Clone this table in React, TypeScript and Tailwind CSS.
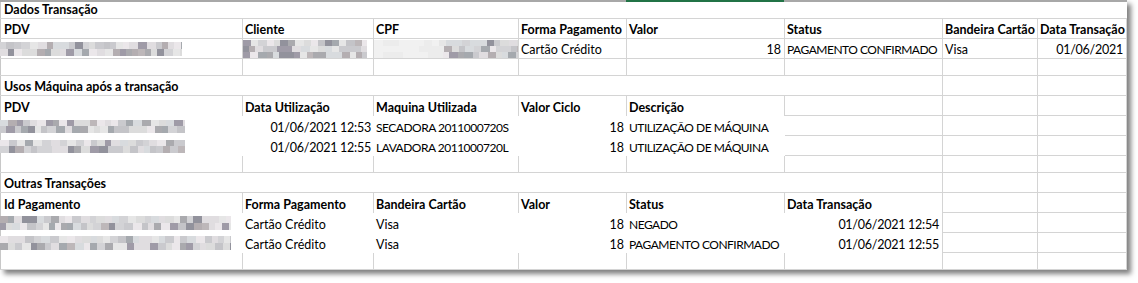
import type { ReactNode } from 'react';
import clsx from 'clsx';

const COLS = 'grid grid-cols-[243px_131px_145px_108px_158px_158px_95px_89px]';

const SPAN: Record<number, string> = {
  1: 'col-span-1',
  2: 'col-span-2',
  3: 'col-span-3',
  4: 'col-span-4',
  5: 'col-span-5',
  6: 'col-span-6',
  7: 'col-span-7',
  8: 'col-span-8',
};

const LIGHT = ['#e6e6e6', '#dcdcdc', '#d3d3d6', '#cacace', '#ebe7ea', '#d8dbde', '#e0dde0'];
const DARK = ['#aaaaae', '#9f9ba7', '#b4aeb1', '#92929c', '#bdb7b9', '#a5a9ae', '#c4c4c8'];

function rng(seed: number) {
  let s = seed * 9301 + 49297;
  return () => {
    s = (s * 9301 + 49297) % 233280;
    return s / 233280;
  };
}

// pixelated "blurred" patch standing in for hidden data
function Mosaic({
  w,
  h,
  seed,
  fade = 0,
}: {
  w: number;
  h: number;
  seed: number;
  fade?: number;
}) {
  const rand = rng(seed);
  const rows = Math.max(1, Math.round(h / 7));
  const bh = h / rows;
  const blocks: { x: number; y: number; bw: number; c: string }[] = [];
  for (let r = 0; r < rows; r++) {
    let x = 0;
    while (x < w) {
      const bw = Math.min(w - x, 6 + Math.floor(rand() * 4));
      const dark = rand() < (r === rows - 1 ? 0.45 : 0.3);
      const pal = dark ? DARK : LIGHT;
      let c = pal[Math.floor(rand() * pal.length)];
      if (x < fade) c = rand() < 0.5 ? '#f1f1f1' : '#ececec';
      blocks.push({ x, y: r * bh, bw, c });
      x += bw;
    }
  }
  return (
    <div className="relative shrink-0 blur-[0.4px]" style={{ width: w, height: h }}>
      {blocks.map((b, i) => (
        <div
          key={i}
          className="absolute"
          style={{ left: b.x, top: b.y, width: b.bw, height: bh, background: b.c }}
        />
      ))}
    </div>
  );
}

function Cell({
  span = 1,
  r = true,
  b = true,
  right,
  bold,
  first,
  caps,
  num,
  children,
}: {
  span?: number;
  r?: boolean;
  b?: boolean;
  right?: boolean;
  bold?: boolean;
  first?: boolean;
  caps?: boolean;
  num?: boolean;
  children?: ReactNode;
}) {
  return (
    <div
      className={clsx(
        SPAN[span],
        'flex min-w-0 items-end overflow-visible whitespace-nowrap border-[#d4d4d4] pb-[1px]',
        r && 'border-r',
        b && 'border-b',
        right ? 'justify-end pr-[3px]' : first ? 'pl-[4px]' : 'pl-[2px]',
        bold && 'font-bold',
        caps && 'text-[12px] tracking-[-0.5px]',
        num && 'tracking-[-0.25px]',
      )}
    >
      {children}
    </div>
  );
}

function Row({ tall = true, children }: { tall?: boolean; children: ReactNode }) {
  return <div className={clsx(COLS, tall ? 'h-[20px]' : 'h-[17px]')}>{children}</div>;
}

function Spare({ n = 2 }: { n?: number }) {
  return (
    <>
      {Array.from({ length: n }).map((_, i) => (
        <Cell key={i} />
      ))}
    </>
  );
}

export default function App() {
  return (
    <div className="min-h-screen bg-white">
      <div className="w-[1127px] bg-white font-['Lato','Open_Sans',sans-serif] text-[12.5px] leading-[15px] text-black shadow-[4px_4px_5px_rgba(0,0,0,0.5),inset_1px_0_0_#c8c8c8]">
        {/* column header edge, selected column in green */}
        <div className="flex h-[2px]">
          <div className="w-[626px] bg-[#a8a8a8]" />
          <div className="w-[158px] bg-[#217346]" />
          <div className="flex-1 bg-[#a8a8a8]" />
        </div>

        <div className={clsx(COLS, 'h-[17px]')}>
          <Cell span={8} r={false} bold first>
            Dados Transação
          </Cell>
        </div>

        <Row>
          <Cell bold first>PDV</Cell>
          <Cell bold>Cliente</Cell>
          <Cell bold>CPF</Cell>
          <Cell bold>Forma Pagamento</Cell>
          <Cell bold>Valor</Cell>
          <Cell bold>Status</Cell>
          <Cell bold>Bandeira Cartão</Cell>
          <Cell bold>Data Transação</Cell>
        </Row>
        <Row>
          <div className="flex items-center border-r border-b border-[#d4d4d4]">
            <Mosaic w={182} h={14} seed={3} />
          </div>
          <div className="flex items-center border-r border-b border-[#d4d4d4]">
            <Mosaic w={124} h={18} seed={7} />
          </div>
          <div className="flex items-center border-r border-b border-[#d4d4d4]">
            <Mosaic w={144} h={18} seed={11} fade={64} />
          </div>
          <Cell>Cartão Crédito</Cell>
          <Cell right>18</Cell>
          <Cell caps>PAGAMENTO CONFIRMADO</Cell>
          <Cell>Visa</Cell>
          <Cell right num>01/06/2021</Cell>
        </Row>
        <Row tall={false}>
          <Spare n={8} />
        </Row>

        <Row>
          <Cell span={6} bold first>
            Usos Máquina após a transação
          </Cell>
          <Spare />
        </Row>
        <Row>
          <Cell b={false} bold first>PDV</Cell>
          <Cell b={false} bold>Data Utilização</Cell>
          <Cell b={false} bold>Maquina Utilizada</Cell>
          <Cell b={false} bold>Valor Ciclo</Cell>
          <Cell b={false} bold>Descrição</Cell>
          <Spare n={3} />
        </Row>
        {[
          { when: '01/06/2021 12:53', machine: 'SECADORA 2011000720S', seed: 19 },
          { when: '01/06/2021 12:55', machine: 'LAVADORA 2011000720L', seed: 23 },
        ].map((u) => (
          <Row key={u.when}>
            <div className="flex items-center">
              <Mosaic w={185} h={13} seed={u.seed} />
            </div>
            <Cell r={false} b={false} right num>{u.when}</Cell>
            <Cell r={false} b={false} caps>{u.machine}</Cell>
            <Cell r={false} b={false} right>18</Cell>
            <Cell r={false} b={false} caps>UTILIZAÇÃO DE MÁQUINA</Cell>
            <Spare n={3} />
          </Row>
        ))}
        <Row tall={false}>
          <Spare n={8} />
        </Row>

        <Row>
          <Cell span={6} bold first>
            Outras Transações
          </Cell>
          <Spare />
        </Row>
        <Row>
          <Cell b={false} bold first>Id Pagamento</Cell>
          <Cell b={false} bold>Forma Pagamento</Cell>
          <Cell b={false} bold>Bandeira Cartão</Cell>
          <Cell b={false} bold>Valor</Cell>
          <Cell b={false} bold>Status</Cell>
          <Cell b={false} bold>Data Transação</Cell>
          <Spare />
        </Row>
        {[
          { status: 'NEGADO', when: '01/06/2021 12:54', seed: 31 },
          { status: 'PAGAMENTO CONFIRMADO', when: '01/06/2021 12:55', seed: 37 },
        ].map((t) => (
          <Row key={t.when}>
            <div className="flex items-center">
              <Mosaic w={231} h={14} seed={t.seed} />
            </div>
            <Cell r={false} b={false}>Cartão Crédito</Cell>
            <Cell r={false} b={false}>Visa</Cell>
            <Cell r={false} b={false} right>18</Cell>
            <Cell r={false} b={false} caps>{t.status}</Cell>
            <Cell b={false} right num>{t.when}</Cell>
            <Spare />
          </Row>
        ))}
        <Row tall={false}>
          <Spare n={8} />
        </Row>
      </div>
    </div>
  );
}
